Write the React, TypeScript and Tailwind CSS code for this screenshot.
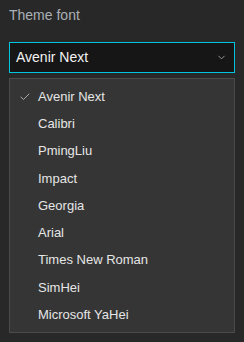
import { Check, ChevronDown } from 'lucide-react';

const fonts = [
  'Avenir Next',
  'Calibri',
  'PmingLiu',
  'Impact',
  'Georgia',
  'Arial',
  'Times New Roman',
  'SimHei',
  'Microsoft YaHei',
];

export default function App() {
  const selected = 'Avenir Next';

  return (
    <div className="h-[342px] w-[244px] bg-[#282828] px-[9px] pt-[5px] font-['Liberation_Sans',sans-serif]">
      <div className="text-[14px] leading-[20px] text-[#aab0b6]">Theme font</div>

      <div className="mt-[17px] flex h-[31px] items-center justify-between border border-[#00c4e0] bg-[#161616] pl-[6px] pr-[7px]">
        <span className="text-[14px] text-[#f2f2f2]">{selected}</span>
        <ChevronDown className="h-[11px] w-[11px] text-[#a0a0a0]" strokeWidth={2} />
      </div>

      <ul className="mt-[5px] border border-[#4b4b4b] bg-[#353535] py-[4px]">
        {fonts.map((f) => (
          <li key={f} className="flex h-[27.25px] items-center text-[13px] text-[#e6e6e6]">
            <span className="flex w-[28px] justify-end pr-[7px]">
              {f === selected && <Check className="h-[12px] w-[12px] text-[#cfcfcf]" strokeWidth={1.5} />}
            </span>
            {f}
          </li>
        ))}
      </ul>
    </div>
  );
}
